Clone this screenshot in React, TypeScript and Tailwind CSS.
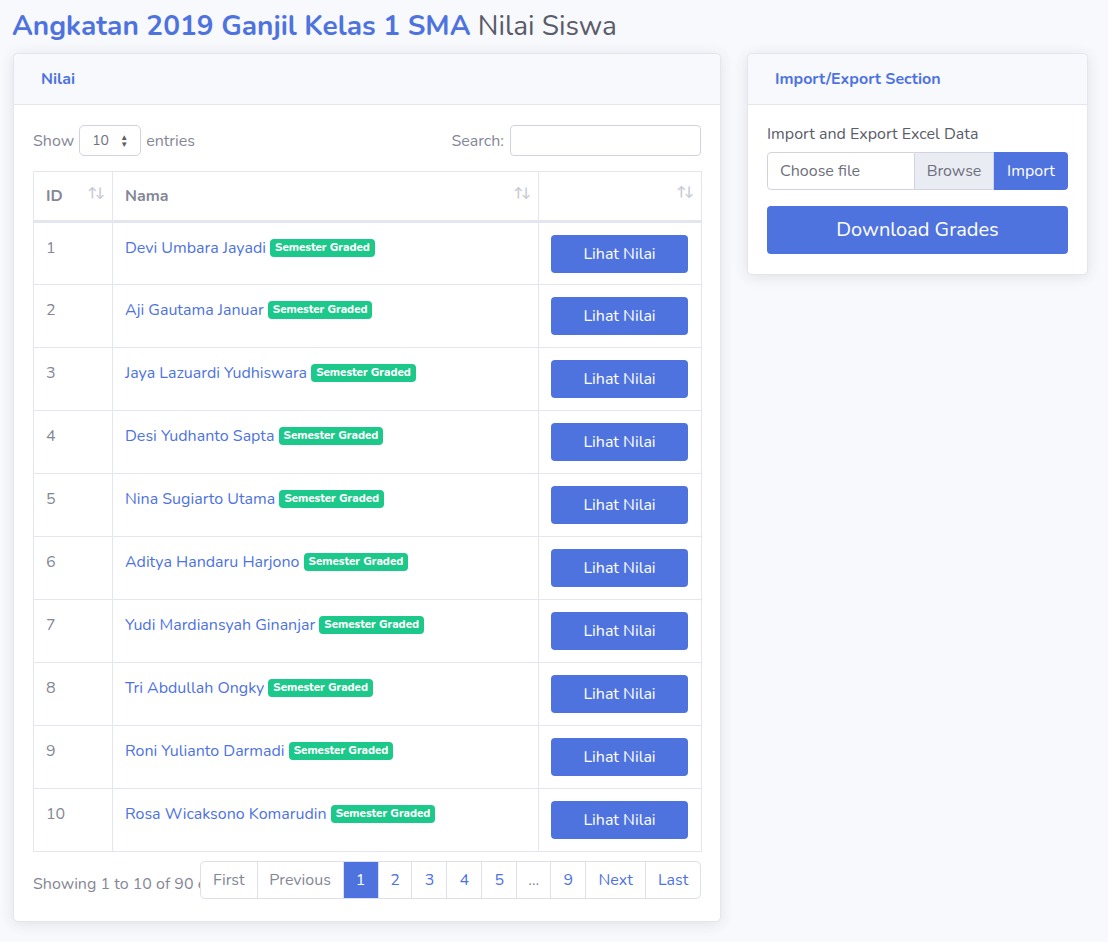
import React from 'react';

const students = [
  'Devi Umbara Jayadi',
  'Aji Gautama Januar',
  'Jaya Lazuardi Yudhiswara',
  'Desi Yudhanto Sapta',
  'Nina Sugiarto Utama',
  'Aditya Handaru Harjono',
  'Yudi Mardiansyah Ginanjar',
  'Tri Abdullah Ongky',
  'Roni Yulianto Darmadi',
  'Rosa Wicaksono Komarudin',
];

const SortIcon = () => (
  <span className="text-[13px] leading-none tracking-[-2px] text-[#c9cbd6]">↑↓</span>
);

const pages: { label: string; w: string }[] = [
  { label: 'First', w: 'w-[56px]' },
  { label: 'Previous', w: 'w-[86px]' },
  { label: '1', w: 'w-[35px]' },
  { label: '2', w: 'w-[34px]' },
  { label: '3', w: 'w-[35px]' },
  { label: '4', w: 'w-[35px]' },
  { label: '5', w: 'w-[35px]' },
  { label: '…', w: 'w-[34px]' },
  { label: '9', w: 'w-[35px]' },
  { label: 'Next', w: 'w-[60px]' },
  { label: 'Last', w: 'w-[55px]' },
];

const App: React.FC = () => {
  return (
    <div
      className="min-h-[942px] bg-[#f8f9fc] text-[#858796] text-base"
      style={{ fontFamily: 'Nunito, Lato, "Noto Sans", sans-serif' }}
    >
      <div className="pl-[12px] pr-[20px] pt-[9px]">
        <h1 className="text-[28px] leading-[34px] mb-[10px] text-[#5a5c69]">
          <span className="font-bold text-[#4e73df]">Angkatan 2019 Ganjil Kelas 1 SMA</span> Nilai Siswa
        </h1>

        <div className="flex gap-[26px] items-start pl-px">
          {/* NILAI CARD */}
          <div className="w-[708px] bg-white rounded-[5px] border border-[#e3e6f0] shadow-[0_2px_14px_rgba(58,59,69,0.12)]">
            <div className="h-[51px] bg-[#f8f9fc] border-b border-[#e3e6f0] flex items-center px-[27px] rounded-t-[5px]">
              <span className="font-bold text-[16px] text-[#4e73df]">Nilai</span>
            </div>

            <div className="px-[19px] pt-[20px] pb-[22px]">
              <div className="flex items-center justify-between h-[31px]">
                <div className="flex items-center gap-[5px] text-[16px]">
                  <span>Show</span>
                  <div className="w-[62px] h-[31px] border border-[#d1d3e2] rounded-[5px] flex items-center justify-between px-[12px] text-[14px] text-[#6e707e]">
                    <span>10</span>
                    <span className="text-[8px] leading-[7px] flex flex-col text-[#5a5c69]">
                      <span>▲</span>
                      <span>▼</span>
                    </span>
                  </div>
                  <span>entries</span>
                </div>
                <div className="flex items-center gap-[6px] text-[16px]">
                  <span>Search:</span>
                  <div className="w-[191px] h-[31px] border border-[#d1d3e2] rounded-[4px] bg-white" />
                </div>
              </div>

              <table className="mt-[15px] w-[668px] border-collapse table-fixed">
                <colgroup>
                  <col className="w-[79px]" />
                  <col className="w-[426px]" />
                  <col className="w-[163px]" />
                </colgroup>
                <thead>
                  <tr className="h-[50px]">
                    <th className="border border-[#e3e6f0] border-b-[3px] text-left font-bold text-[#858796] px-[12px] align-middle">
                      <div className="flex justify-between items-center">
                        <span>ID</span>
                        <span className="-mt-[8px] mr-[-3px]"><SortIcon /></span>
                      </div>
                    </th>
                    <th className="border border-[#e3e6f0] border-b-[3px] text-left font-bold text-[#858796] px-[12px] align-middle">
                      <div className="flex justify-between items-center">
                        <span>Nama</span>
                        <span className="-mt-[8px] mr-[-3px]"><SortIcon /></span>
                      </div>
                    </th>
                    <th className="border border-[#e3e6f0] border-b-[3px] px-[12px] align-middle">
                      <div className="flex justify-end -mt-[8px] mr-[-3px]">
                        <SortIcon />
                      </div>
                    </th>
                  </tr>
                </thead>
                <tbody>
                  {students.map((name, i) => (
                    <tr key={name} className="h-[63px]">
                      <td className="border border-[#e3e6f0] px-[12px] pt-[13px] align-top text-[#858796]">{i + 1}</td>
                      <td className="border border-[#e3e6f0] px-[12px] pt-[13px] align-top">
                        <span className="text-[#4e73df]">{name}</span>{' '}
                        <span className="inline-block bg-[#1cc88a] text-white text-[11.5px] font-extrabold leading-none px-[5px] py-[3px] rounded-[4px] align-[2px]">
                          Semester Graded
                        </span>
                      </td>
                      <td className="border border-[#e3e6f0] px-[12px] align-top pt-[12px]">
                        <div className="w-[137px] h-[38px] bg-[#4e73df] rounded-[4px] text-white flex items-center justify-center">
                          Lihat Nilai
                        </div>
                      </td>
                    </tr>
                  ))}
                </tbody>
              </table>

              <div className="flex items-start mt-[9px]">
                <div className="w-[167px] overflow-hidden whitespace-nowrap pt-[11px] text-[16px] leading-[24px]">
                  Showing 1 to 10 of 90 entries
                </div>
                <div className="flex h-[38px] border border-[#dddfeb] rounded-[5px] overflow-hidden bg-white">
                  {pages.map((p, i) => {
                    const active = p.label === '1';
                    const disabled = p.label === 'First' || p.label === 'Previous' || p.label === '…';
                    return (
                      <div
                        key={p.label}
                        className={
                          'flex items-center justify-center ' +
                          p.w +
                          ' ' +
                          (i > 0 ? 'border-l border-[#dddfeb] ' : '') +
                          (active
                            ? 'bg-[#4e73df] text-white border-[#4e73df]'
                            : disabled
                            ? 'text-[#858796]'
                            : 'text-[#4e73df]')
                        }
                      >
                        {p.label}
                      </div>
                    );
                  })}
                </div>
              </div>
            </div>
          </div>

          {/* IMPORT EXPORT CARD */}
          <div className="w-[341px] bg-white rounded-[5px] border border-[#e3e6f0] shadow-[0_2px_14px_rgba(58,59,69,0.12)]">
            <div className="h-[51px] bg-[#f8f9fc] border-b border-[#e3e6f0] flex items-center px-[27px] rounded-t-[5px]">
              <span className="font-bold text-[16px] text-[#4e73df]">Import/Export Section</span>
            </div>
            <div className="px-[19px] pt-[18px] pb-[20px]">
              <div className="text-[16px] leading-[22px] text-[#5a5c69] mb-[7px]">Import and Export Excel Data</div>
              <div className="flex h-[38px]">
                <div className="w-[148px] border border-[#d1d3e2] rounded-l-[4px] flex items-center px-[12px] text-[#6e707e]">
                  Choose file
                </div>
                <div className="w-[79px] bg-[#eaecf4] border border-l-0 border-[#d1d3e2] flex items-center justify-center text-[#6e707e]">
                  Browse
                </div>
                <div className="flex-1 bg-[#4e73df] rounded-r-[4px] text-white flex items-center justify-center">
                  Import
                </div>
              </div>
              <div className="mt-[16px] h-[48px] bg-[#4e73df] rounded-[4px] text-white text-[20px] flex items-center justify-center">
                Download Grades
              </div>
            </div>
          </div>
        </div>
      </div>
    </div>
  );
};

export default App;
